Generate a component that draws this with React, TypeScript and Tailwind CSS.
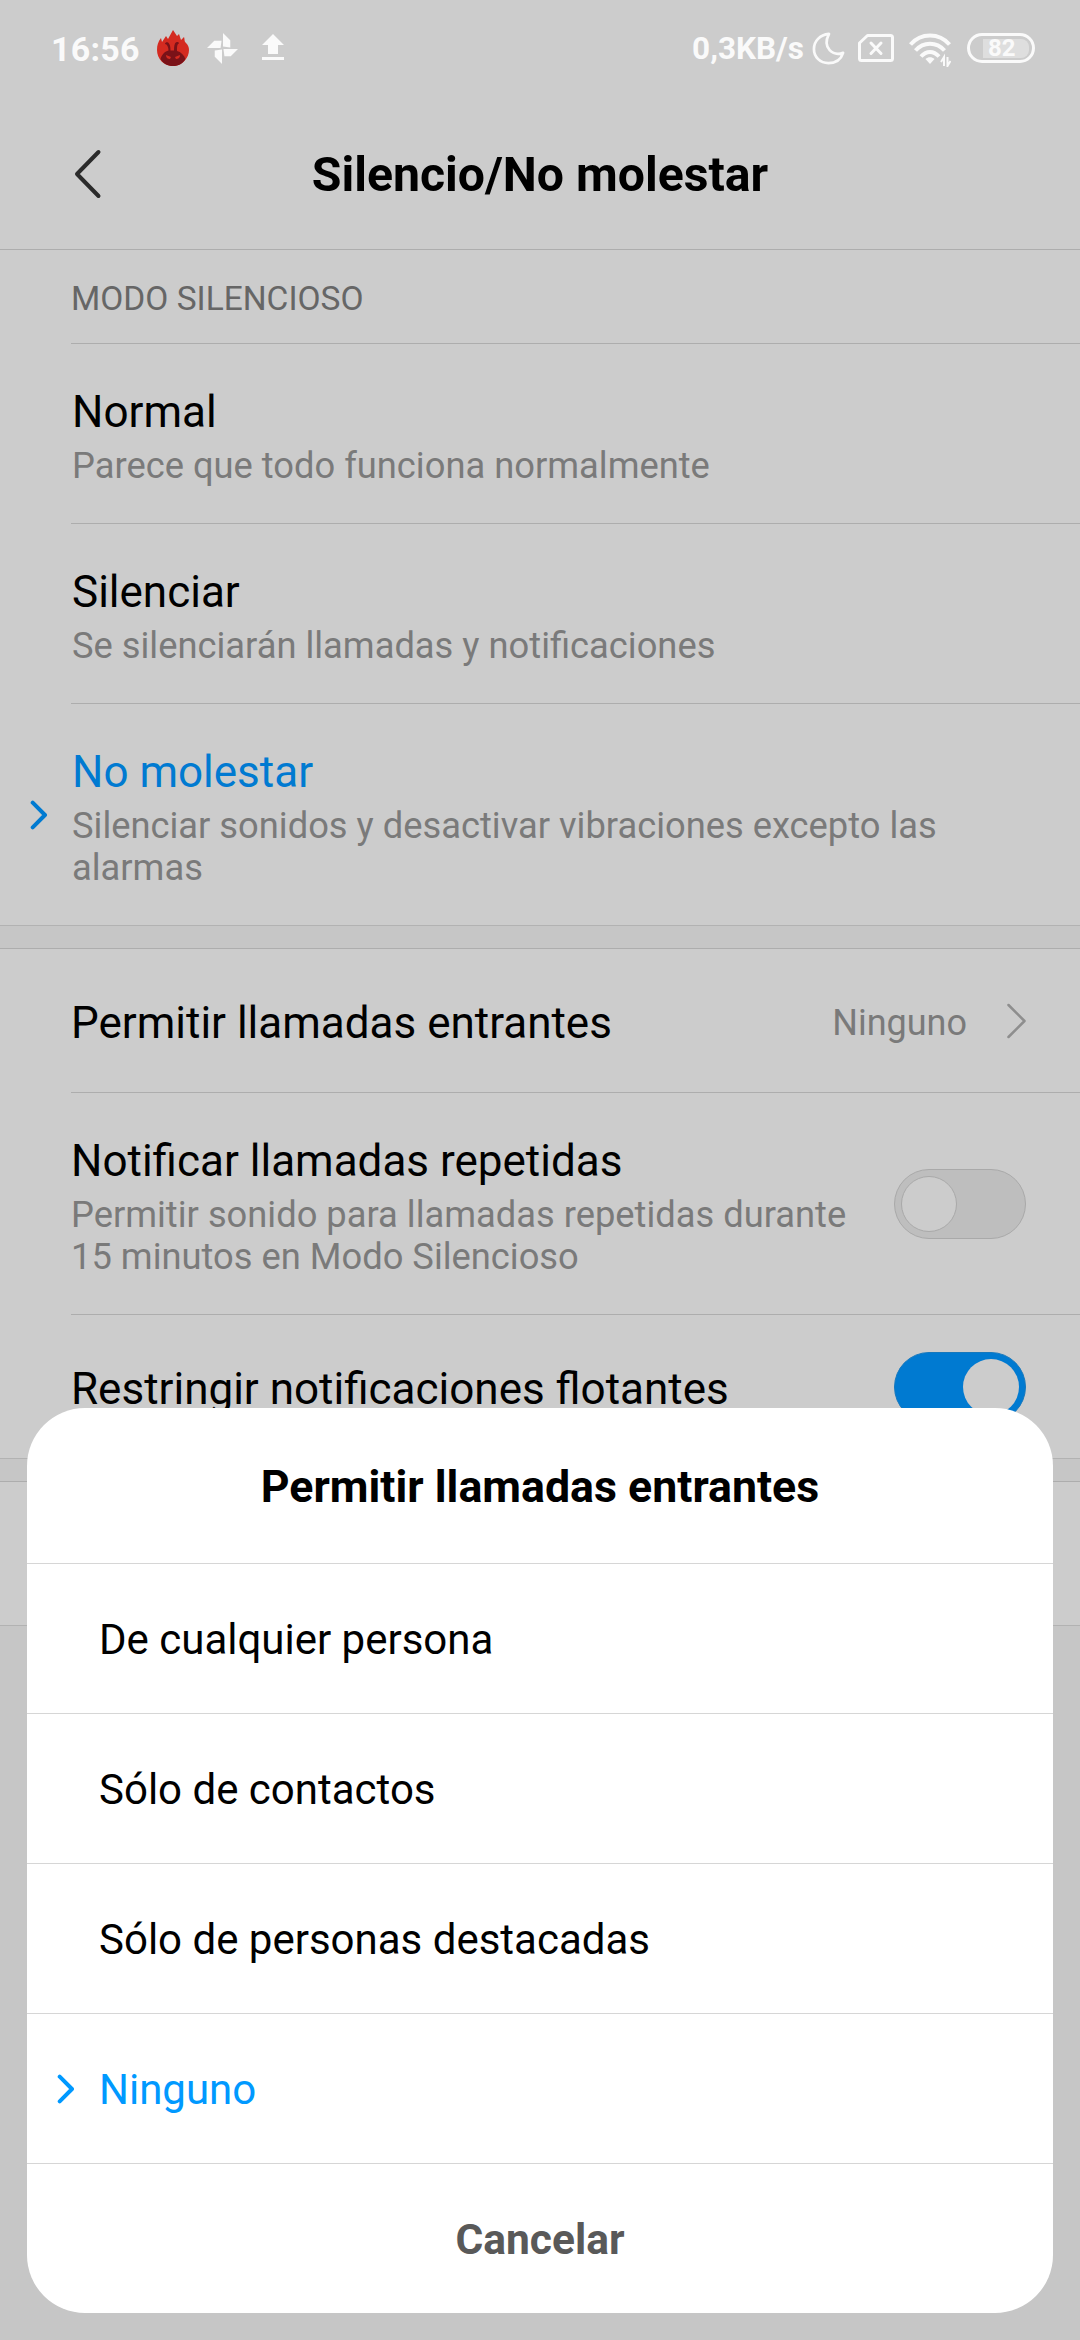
import { clsx } from "clsx";

const modes = [
  { title: "Normal", description: "Parece que todo funciona normalmente" },
  { title: "Silenciar", description: "Se silenciarán llamadas y notificaciones" },
  {
    title: "No molestar",
    description: "Silenciar sonidos y desactivar vibraciones excepto las alarmas",
    selected: true,
  },
];

const options = [
  { label: "De cualquier persona" },
  { label: "Sólo de contactos" },
  { label: "Sólo de personas destacadas" },
  { label: "Ninguno", selected: true },
];

function SelectedMark() {
  return (
    <svg viewBox="0 0 18 30" className="h-[30px] w-[18px] shrink-0" fill="none">
      <path d="M2.700 2.700 15 15 2.700 27.300" stroke="currentColor" strokeWidth="4" strokeLinecap="round" strokeLinejoin="round" />
    </svg>
  );
}

function StatusBar() {
  return (
    <div className="flex h-[96px] items-center justify-between pr-[45px] pl-[51px] text-[#fafafa]">
      <div className="flex items-center">
        <span className="w-[106px] pt-0.5 text-[34px] leading-[40px] font-bold tracking-[0.2px] whitespace-nowrap">16:56</span>
        <svg viewBox="0 0 32 36" className="h-9 w-8">
          <path
            d="M16 36C7 36 0 29 0 20c0-5 1-8 4-12l1 4 4-6 2 3 5-9 4 6 2-2 2 6 3-3c1 3 0 4 2 6 2 2 3 4 3 7 0 8-7 16-16 16z"
            fill="#d42a20"
          />
          <path
            d="M3.500 29C5 24 8 21.500 11.500 20.500 11.500 17 10 14 8 14c0-2 3-2.500 4-.5 1.500 2.500 1.500 5 1.500 7h3.500c0-2 0-4.500 1-7 1-2 4-2 4 0-2 0-2 4-2 7.500 4 1 7 4 8.500 8C26 33.500 21.500 36 16 36S6 33.500 3.500 29z"
            fill="#7a1218"
          />
          <path d="m9 25 5 2-1 2c-2 0-4-1-4-4zm14 0-5 2 1 2c2 0 4-1 4-4z" fill="#d42a20" />
        </svg>
        <svg viewBox="0 0 32 32" className="ml-[18px] h-[31px] w-[31px]" fill="currentColor">
          <path d="M16.500 0 24 7.500V15l-7.500-1zM0 15.500 7.500 8H15l-1 7.500zM17 16.500h15L24.500 24H18zM15.500 17v15L8 24.500V18z" />
        </svg>
        <svg viewBox="0 0 22 26" className="mb-0.5 ml-6 h-[26px] w-[22px]" fill="currentColor">
          <path d="M11 0 22 11h-6v9H6v-9H0zM0 23h22v3H0z" />
        </svg>
      </div>
      <div className="flex items-center">
        <span className="pt-0.5 text-[31.5px] leading-[40px] font-bold whitespace-nowrap">0,3KB/s</span>
        <svg viewBox="0 0 34 34" className="ml-2 h-[33px] w-[33px]" fill="none" stroke="currentColor" strokeWidth="2.800" strokeLinejoin="round">
          <path d="M17.500 2C8 3 2 9.500 2 17.500 2 26 8.500 32 17 32c7.500 0 13-4 15-10.500C22 25 10 17 17.500 2z" />
        </svg>
        <svg viewBox="0 0 36 28" className="ml-[13px] h-7 w-9" fill="none" stroke="currentColor" strokeWidth="3">
          <path d="M9.500 1.500H32.500Q34.500 1.500 34.500 3.500V24.500Q34.500 26.500 32.500 26.500H3.500Q1.500 26.500 1.500 24.500V9z" strokeLinejoin="round" />
          <path d="m13 9 10 10.500M23 9 13 19.500" strokeLinecap="round" />
        </svg>
        <svg viewBox="0 0 42 34" className="mt-[3px] ml-[15px] h-[34px] w-[42px]" fill="none" stroke="currentColor" strokeWidth="4">
          <path d="M1.500 11.500C12-.5 30-.5 40.500 11.500M6.500 17.500c8-9 21-9 29 0M12 23.500c5.500-6 12.500-6 18 0" />
          <path d="M16.500 26c2.500-2.500 6.500-2.500 9 0L21 31z" fill="currentColor" stroke="none" />
          <path d="M35 33V24l-3 5M38.500 24v9l3-5" strokeWidth="2" />
        </svg>
        <div className="ml-4 flex h-[30px] w-[68px] items-center justify-end rounded-full border-[3px] border-[#fafafa] pr-[3px]">
          <span className="w-[46px] rounded-r-lg bg-[#dedede] pl-[5px] text-[24px] leading-[19px] font-bold">82</span>
        </div>
      </div>
    </div>
  );
}

function Toggle({ on }: { on?: boolean }) {
  return (
    <div
      className={clsx(
        "flex h-[70px] w-[132px] shrink-0 items-center rounded-full border px-1.5",
        on ? "justify-end border-[#1678bd] bg-[#007ad1]" : "justify-start border-[#a9a9a9] bg-[#bebebe]"
      )}
    >
      <div className={clsx("h-14 w-14 rounded-full bg-[#cccccc]", !on && "border border-[#a9a9a9]")} />
    </div>
  );
}

export default function App() {
  return (
    <div className="relative h-[2340px] w-[1080px] overflow-hidden bg-[#c6c6c6] font-['Roboto',sans-serif] text-black">
      <header className="h-[250px] border-b border-[#adadad] bg-[#cccccc]">
        <StatusBar />
        <div className="flex h-[153px] items-center pt-0.5">
          <svg viewBox="0 0 28 50" className="ml-[74px] h-[50px] w-7" fill="none">
            <path d="M24.500 3 3 25l21.500 22" stroke="#2b2b2b" strokeWidth="4" strokeLinecap="round" strokeLinejoin="round" />
          </svg>
          <h1 className="mr-[102px] flex-1 pt-0.5 text-center text-[48.2px] leading-[56px] font-bold">
            Silencio/No molestar
          </h1>
        </div>
      </header>

      <section className="border-b border-[#b2b2b2] bg-[#cccccc]">
        <h2 className="ml-[71px] h-[94px] border-b border-[#adadad] pt-[29px] text-[33.5px] leading-[40px] text-[#666666]">
          MODO SILENCIOSO
        </h2>
        {modes.map((mode, index) => (
          <div key={mode.title} className="flex">
            <div className="flex w-[71px] shrink-0 items-center pl-[30px] text-[#007ad1]">
              {mode.selected && <SelectedMark />}
            </div>
            <div
              className={clsx(
                "flex-1 pt-[42px] pr-[100px] pl-px",
                index < modes.length - 1 ? "h-[180px] border-b border-[#adadad]" : "h-[221px]"
              )}
            >
              <h3 className={clsx("text-[44px] leading-[52px]", mode.selected && "text-[#007ad1]")}>{mode.title}</h3>
              <p className="mt-[7px] text-[36.3px] leading-[42px] text-[#7a7a7a]">{mode.description}</p>
            </div>
          </div>
        ))}
      </section>

      <section className="mt-[22px] border-y border-t-[#adadad] border-b-[#b2b2b2] bg-[#cccccc] pl-[71px]">
        <div className="flex h-[144px] items-center border-b border-[#adadad] pr-[54px]">
          <h3 className="flex-1 pt-1 text-[44px] leading-[52px]">Permitir llamadas entrantes</h3>
          <span className="pt-1 text-[36px] leading-[42px] text-[#7a7a7a]">Ninguno</span>
          <svg viewBox="0 0 20 36" className="ml-[39px] h-9 w-5" fill="none">
            <path d="M2.500 2 18.500 18 2.500 34" stroke="#8e8e8e" strokeWidth="2.500" strokeLinecap="round" strokeLinejoin="round" />
          </svg>
        </div>
        <div className="flex h-[222px] items-center border-b border-[#adadad] pr-[54px]">
          <div className="flex-1 self-start pt-[42px]">
            <h3 className="text-[44px] leading-[52px]">Notificar llamadas repetidas</h3>
            <p className="mt-[7px] text-[36.3px] leading-[42px] text-[#7a7a7a]">
              Permitir sonido para llamadas repetidas durante
              <br />
              15 minutos en Modo Silencioso
            </p>
          </div>
          <Toggle />
        </div>
        <div className="flex h-[143px] items-center pr-[54px]">
          <h3 className="flex-1 pt-1 text-[44px] leading-[52px]">Restringir notificaciones flotantes</h3>
          <Toggle on />
        </div>
      </section>

      <section className="mt-[22px] h-[145px] border-y border-t-[#adadad] border-b-[#b2b2b2] bg-[#cccccc]" />

      <div
        role="dialog"
        className="absolute inset-x-[27px] bottom-[27px] h-[905px] overflow-hidden rounded-[58px] bg-white"
      >
        <h2 className="flex h-[156px] items-center justify-center border-b border-[#d6d6d6] pt-[5px] text-[44.7px] font-bold">
          Permitir llamadas entrantes
        </h2>
        {options.map((option) => (
          <div
            key={option.label}
            className={clsx(
              "flex h-[150px] items-center border-b border-[#d6d6d6] text-[42px]",
              option.selected && "text-[#0099ff]"
            )}
          >
            <div className="w-[72px] pl-[30px]">{option.selected && <SelectedMark />}</div>
            <span className="pt-px">{option.label}</span>
          </div>
        ))}
        <button className="flex h-[149px] w-full items-center justify-center pt-[3px] text-[42.5px] font-bold text-[#595959]">
          Cancelar
        </button>
      </div>
    </div>
  );
}
